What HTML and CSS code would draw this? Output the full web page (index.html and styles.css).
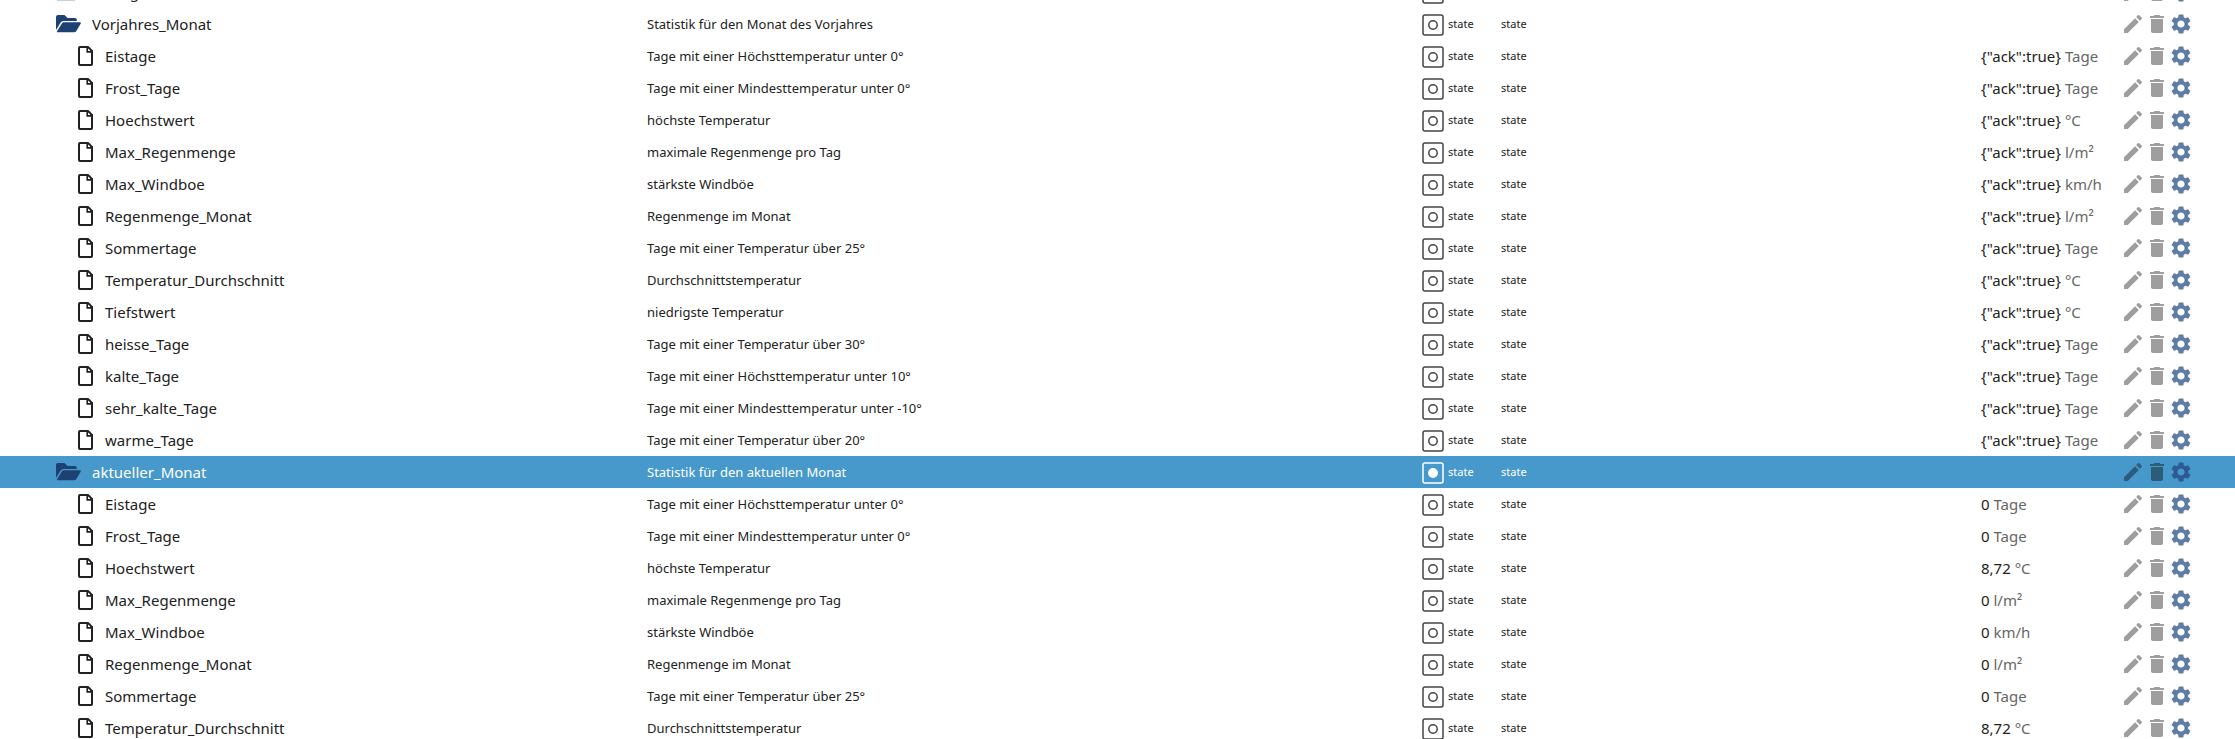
FILE: index.html
```html
<!DOCTYPE html>
<html lang="de">
<head>
    <meta charset="UTF-8">
    <meta name="viewport" content="width=device-width, initial-scale=1.0">
    <title>Objekte</title>
    <link rel="stylesheet" href="styles.css">
</head>
<body>
    <svg class="sprite" aria-hidden="true">
        <symbol id="folder" viewBox="0 0 25 18">
            <path d="M2 0h6.500l3 3H19a1.800 1.800 0 0 1 1.800 1.800V6H7.500a3.500 3.500 0 0 0-3 1.700L0 15V2a2 2 0 0 1 2-2z"/>
            <path d="M7.800 7.200H24a.9.9 0 0 1 .8 1.400l-4.600 7.600a2.200 2.200 0 0 1-1.900 1.100H1.600a.7.7 0 0 1-.6-1.100l5-8a2.200 2.200 0 0 1 1.800-1z"/>
        </symbol>
        <symbol id="file" viewBox="0 0 15 20">
            <path d="M1.900 1h8.100L14 5v13.100a.9.9 0 0 1-.9.9H1.900a.9.9 0 0 1-.9-.9V1.900A.9.9 0 0 1 1.900 1z" fill="none" stroke="currentColor" stroke-width="2"/>
            <path d="M9.200 1v4.900H14" fill="none" stroke="currentColor" stroke-width="1.600"/>
        </symbol>
        <symbol id="state" viewBox="0 0 22 22">
            <rect x="1" y="1" width="20" height="20" rx="2" fill="none" stroke="currentColor" stroke-width="1.500"/>
            <circle class="dot" cx="11" cy="11" r="4.200" stroke-width="1.500"/>
        </symbol>
        <symbol id="edit" viewBox="0 0 24 24">
            <path d="M3 17.250V21h3.750L17.810 9.940l-3.750-3.750L3 17.250zM20.710 7.040c.39-.39.39-1.020 0-1.410l-2.340-2.340a.9959.9959 0 0 0-1.410 0l-1.830 1.830 3.750 3.750 1.830-1.830z"/>
        </symbol>
        <symbol id="delete" viewBox="0 0 24 24">
            <path d="M6 19c0 1.100.9 2 2 2h8c1.100 0 2-.9 2-2V7H6v12zM19 4h-3.500l-1-1h-5l-1 1H5v2h14V4z"/>
        </symbol>
        <symbol id="settings" viewBox="0 0 24 24">
            <path d="M19.140 12.940c.04-.3.06-.61.06-.94 0-.32-.02-.64-.07-.94l2.030-1.580c.18-.14.23-.41.12-.61l-1.920-3.320c-.12-.22-.37-.29-.59-.22l-2.390.96c-.5-.38-1.030-.7-1.620-.94l-.36-2.540c-.04-.24-.24-.41-.48-.41h-3.840c-.24 0-.43.17-.47.41l-.36 2.540c-.59.24-1.130.57-1.620.94l-2.390-.96c-.22-.08-.47 0-.59.22L2.740 8.870c-.12.21-.08.47.12.61l2.030 1.580c-.05.3-.09.63-.09.94s.02.64.07.94l-2.030 1.580c-.18.14-.23.41-.12.61l1.920 3.320c.12.22.37.29.59.22l2.390-.96c.5.38 1.030.7 1.620.94l.36 2.540c.05.24.24.41.48.41h3.840c.24 0 .44-.17.47-.41l.36-2.540c.59-.24 1.130-.56 1.620-.94l2.390.96c.22.08.47 0 .59-.22l1.920-3.320c.12-.22.07-.47-.12-.61l-2.010-1.580zM12 15.600c-1.980 0-3.600-1.620-3.600-3.600s1.620-3.600 3.600-3.600 3.600 1.620 3.600 3.600-1.620 3.600-3.600 3.600z"/>
        </symbol>
    </svg>

    <div class="tree">
        <table class="objects">
            <colgroup>
                <col class="col-name">
                <col class="col-desc">
                <col class="col-type">
                <col class="col-role">
                <col class="col-value">
                <col class="col-actions">
            </colgroup>
            <tbody id="rows"></tbody>
        </table>
    </div>

    <script src="script.js"></script>
</body>
</html>
```
FILE: styles.css
```css
:root {
    --text: #212121;
    --unit: #666666;
    --folder: #1e4173;
    --selected: #4799cc;
    --icon: #9e9e9e;
    --gear: #5f7ca4;
    --dot-fill: none;
}

* {
    margin: 0;
    padding: 0;
    box-sizing: border-box;
}

body {
    font-family: 'Noto Sans', 'Open Sans', sans-serif;
    font-size: 15px;
    color: var(--text);
    background: #fff;
}

.sprite {
    display: none;
}

svg {
    display: block;
    flex: none;
    fill: currentColor;
}

.tree {
    height: 100vh;
    overflow: hidden;
}

/* list is scrolled part of a row */
.objects {
    width: 100%;
    margin-top: -24px;
    table-layout: fixed;
    border-collapse: collapse;
}

.col-name { width: 647px; }
.col-type { width: 80px; }
.col-role { width: 480px; }
.col-value { width: 140px; }
.col-actions { width: 114px; }

.objects td {
    height: 32px;
    line-height: 24px;
    white-space: nowrap;
    vertical-align: middle;
}

.name,
.type,
.actions {
    display: flex;
    align-items: center;
}

.name {
    gap: 12px;
    padding-left: 78px;
}

.folder .name {
    gap: 11px;
    padding-left: 56px;
}

.icon-file {
    width: 15px;
    height: 20px;
}

.icon-folder {
    width: 25px;
    height: 18px;
    color: var(--folder);
}

.objects .desc {
    font-size: 13px;
}

.objects .small {
    font-size: 11px;
}

.type {
    gap: 4px;
    padding-left: 1px;
}

.icon-state {
    width: 22px;
    height: 22px;
    margin-top: 2px;
    color: #444;
}

.dot {
    fill: var(--dot-fill);
    stroke: currentColor;
}

.unit {
    color: var(--unit);
}

.btn {
    width: 24px;
    height: 24px;
    border: none;
    background: none;
    color: var(--icon);
    cursor: pointer;
}

.btn svg {
    width: 24px;
    height: 24px;
}

.btn-settings {
    color: var(--gear);
}

.selected {
    --dot-fill: #fff;
    background: var(--selected);
    color: #fff;
}

.selected .icon-state {
    color: #fff;
}

.selected .btn {
    color: #2c5c7a;
}

.selected .btn-settings {
    color: #2d5b91;
}
```
FILE: script.js
```js
const states = [
    ['Eistage', 'Tage mit einer Höchsttemperatur unter 0°', 'Tage', '0'],
    ['Frost_Tage', 'Tage mit einer Mindesttemperatur unter 0°', 'Tage', '0'],
    ['Hoechstwert', 'höchste Temperatur', '°C', '8,72'],
    ['Max_Regenmenge', 'maximale Regenmenge pro Tag', 'l/m²', '0'],
    ['Max_Windboe', 'stärkste Windböe', 'km/h', '0'],
    ['Regenmenge_Monat', 'Regenmenge im Monat', 'l/m²', '0'],
    ['Sommertage', 'Tage mit einer Temperatur über 25°', 'Tage', '0'],
    ['Temperatur_Durchschnitt', 'Durchschnittstemperatur', '°C', '8,72'],
    ['Tiefstwert', 'niedrigste Temperatur', '°C'],
    ['heisse_Tage', 'Tage mit einer Temperatur über 30°', 'Tage'],
    ['kalte_Tage', 'Tage mit einer Höchsttemperatur unter 10°', 'Tage'],
    ['sehr_kalte_Tage', 'Tage mit einer Mindesttemperatur unter -10°', 'Tage'],
    ['warme_Tage', 'Tage mit einer Temperatur über 20°', 'Tage']
];

function icon(name) {
    return `<svg class="icon-${name}" aria-hidden="true"><use href="#${name}"/></svg>`;
}

function row(kind, name, desc, value, unit) {
    return `<tr class="${kind}">
        <td><div class="name">${icon(kind.startsWith('folder') ? 'folder' : 'file')}<span>${name}</span></div></td>
        <td class="desc">${desc}</td>
        <td class="small"><div class="type">${icon('state')}<span>state</span></div></td>
        <td class="small">state</td>
        <td>${value} <span class="unit">${unit}</span></td>
        <td><div class="actions">
            <button class="btn" aria-label="Bearbeiten">${icon('edit')}</button>
            <button class="btn" aria-label="Löschen">${icon('delete')}</button>
            <button class="btn btn-settings" aria-label="Einstellungen">${icon('settings')}</button>
        </div></td>
    </tr>`;
}

document.getElementById('rows').innerHTML = [
    row('folder', 'Vortag', '', '', ''),
    row('folder', 'Vorjahres_Monat', 'Statistik für den Monat des Vorjahres', '', ''),
    ...states.map(([name, desc, unit]) => row('file', name, desc, '{"ack":true}', unit)),
    row('folder selected', 'aktueller_Monat', 'Statistik für den aktuellen Monat', '', ''),
    ...states.slice(0, 8).map(([name, desc, unit, value]) => row('file', name, desc, value, unit))
].join('');
```
